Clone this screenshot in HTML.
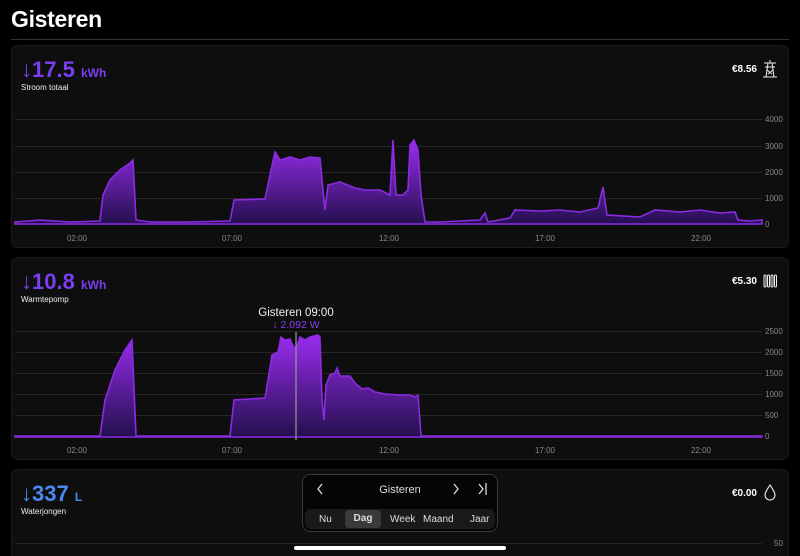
<!DOCTYPE html>
<html><head><style>
*{margin:0;padding:0;box-sizing:border-box}
html,body{width:800px;height:556px;overflow:hidden}
body{background:#000;font-family:"Liberation Sans",sans-serif;color:#fff;position:relative}
h1{position:absolute;left:11px;top:6px;font-size:23px;font-weight:bold;letter-spacing:-0.3px}
.hr{position:absolute;left:11px;top:39px;width:778px;height:1px;background:#333}
.card{position:absolute;left:11px;width:778px;background:#0e0e0e;border:1px solid #1c1c1c;border-radius:7px}
.val{position:absolute;left:10px;top:12px;font-size:22px;color:#7b3ff2;font-weight:bold}
.val small{font-size:12px}
.lbl{position:absolute;left:10px;top:38px;font-size:8px;color:#eee}
.cost{position:absolute;right:32px;top:19px;font-size:10px;font-weight:bold}
svg{position:absolute;left:0;top:0}
</style></head><body>
<h1>Gisteren</h1><div class="hr"></div>
<div class="card" style="top:45px;height:203px"></div>
<div class="card" style="top:257px;height:203px"></div>
<div class="card" style="top:469px;height:100px"></div>
<svg width="800" height="556" style="z-index:1">
<defs><linearGradient id="g1" x1="0" y1="140" x2="0" y2="224" gradientUnits="userSpaceOnUse"><stop offset="0" stop-color="#9a2cf0"/><stop offset="1" stop-color="#24104f"/></linearGradient>
<linearGradient id="g2" x1="0" y1="335" x2="0" y2="436" gradientUnits="userSpaceOnUse"><stop offset="0" stop-color="#9a2cf0"/><stop offset="1" stop-color="#24104f"/></linearGradient></defs>
<g stroke="#262626" stroke-width="1">
<line x1="15" x2="762" y1="119.5" y2="119.5"/><line x1="15" x2="762" y1="146.5" y2="146.5"/><line x1="15" x2="762" y1="172.5" y2="172.5"/><line x1="15" x2="762" y1="198.5" y2="198.5"/><line x1="15" x2="762" y1="224.5" y2="224.5"/>
<line x1="15" x2="762" y1="331.5" y2="331.5"/><line x1="15" x2="762" y1="352.5" y2="352.5"/><line x1="15" x2="762" y1="373.5" y2="373.5"/><line x1="15" x2="762" y1="394.5" y2="394.5"/><line x1="15" x2="762" y1="415.5" y2="415.5"/><line x1="15" x2="762" y1="436.5" y2="436.5"/>
<line x1="15" x2="762" y1="543.5" y2="543.5"/>
</g>
<path fill="url(#g1)" stroke="#8a2be2" stroke-width="1.6" d="M15 222 L40 220 L70 222 L100 221 L103 195 L110 180 L120 170 L130 163 L133 160 L136 220 L150 222 L190 222 L230 221 L234 200 L265 199 L270 175 L275 152 L280 160 L290 157 L300 160 L310 157 L320 158 L322 180 L325 210 L328 185 L340 182 L355 188 L365 190 L380 190 L390 195 L393 140 L396 195 L403 195 L408 190 L410 145 L414 140 L418 150 L421 195 L425 222 L440 222 L480 220 L485 213 L488 222 L510 218 L515 210 L540 211 L560 210 L580 212 L598 208 L603 187 L607 215 L640 217 L655 210 L680 212 L700 210 L720 213 L735 212 L738 220 L750 221 L762 220 L762 224 L15 224Z"/>
<path fill="url(#g2)" stroke="#8a2be2" stroke-width="1.6" d="M15 436 L100 436 L105 400 L115 370 L125 350 L132 340 L136 436 L230 436 L234 400 L265 398 L268 380 L272 355 L278 352 L281 337 L285 340 L290 339 L293 346 L296 349 L300 337 L305 340 L310 337 L318 335 L320 337 L322 400 L324 420 L326 385 L330 375 L335 373 L337 368 L340 376 L350 376 L355 383 L362 389 L368 388 L375 392 L385 394 L400 395 L410 395 L415 397 L418 395 L421 436 L762 436 L762 437 L15 437Z"/>
<line x1="296" x2="296" y1="332" y2="440" stroke="#999" stroke-width="1.2"/>
<g fill="#888" font-size="8" font-family="Liberation Sans">
<text x="765" y="122">4000</text><text x="765" y="149">3000</text><text x="765" y="175">2000</text><text x="765" y="201">1000</text><text x="765" y="227">0</text>
<text x="765" y="334">2500</text><text x="765" y="355">2000</text><text x="765" y="376">1500</text><text x="765" y="397">1000</text><text x="765" y="418">500</text><text x="765" y="439">0</text>
<text x="774" y="546">50</text>
<g text-anchor="middle"><text x="77" y="241">02:00</text><text x="232" y="241">07:00</text><text x="389" y="241">12:00</text><text x="545" y="241">17:00</text><text x="701" y="241">22:00</text>
<text x="77" y="453">02:00</text><text x="232" y="453">07:00</text><text x="389" y="453">12:00</text><text x="545" y="453">17:00</text><text x="701" y="453">22:00</text></g>
</g>
<text x="296" y="316" text-anchor="middle" fill="#eee" font-size="11.5" font-family="Liberation Sans">Gisteren 09:00</text>
<text x="296" y="328" text-anchor="middle" fill="#8a3cf0" font-size="10.5" font-family="Liberation Sans">↓ 2.092 W</text>
<g stroke="#eee" stroke-width="1" fill="none"><path d="M764 63h12M765 67h10M770 60v3M768 63l-2 14M772 63l2 14M763 77h14M767 70l5 4M773 70l-5 4"/></g>
<g stroke="#eee" stroke-width="1" fill="none"><rect x="764" y="275" width="2" height="12" rx="1"/><rect x="767.5" y="275" width="2" height="12" rx="1"/><rect x="771" y="275" width="2" height="12" rx="1"/><rect x="774.5" y="275" width="2" height="12" rx="1"/></g>
<path d="M770 485 C766 491 765 493 765 495 a5 5 0 0 0 10 0 C775 493 774 491 770 485Z" stroke="#eee" stroke-width="1.1" fill="none"/>
</svg>
<div style="position:absolute;left:11px;top:45px;width:778px;height:90px;z-index:2">
<div class="val">↓17.5 <small>kWh</small></div><div class="lbl">Stroom totaal</div><div class="cost">€8.56</div></div>
<div style="position:absolute;left:11px;top:257px;width:778px;height:50px;z-index:2">
<div class="val">↓10.8 <small>kWh</small></div><div class="lbl">Warmtepomp</div><div class="cost">€5.30</div></div>
<div style="position:absolute;left:11px;top:469px;width:778px;height:50px;z-index:2">
<div class="val" style="color:#4a8af0">↓337 <small>L</small></div><div class="lbl">Waterjongen</div><div class="cost">€0.00</div></div>
<div style="position:absolute;left:302px;top:474px;width:196px;height:58px;background:#050505;border:1px solid #3a3a3a;border-radius:8px;z-index:3;font-size:10px">
<svg width="196" height="30" style="position:absolute;left:0;top:0"><g stroke="#ddd" stroke-width="1.3" fill="none"><path d="M19 9l-4 5 4 5"/><path d="M151 9l4 5-4 5"/><path d="M176 9l4 5-4 5M183 8v12"/></g></svg>
<div style="position:absolute;left:0;width:100%;top:9px;text-align:center;color:#ddd;font-size:11px">Gisteren</div>
<div style="position:absolute;left:2px;top:34px;width:190px;height:20px;background:#1a1a1a;border-radius:5px;color:#ddd">
<span style="position:absolute;left:14px;top:5px">Nu</span>
<span style="position:absolute;left:40px;top:1px;width:36px;height:18px;background:#3a3a3c;border-radius:4px;text-align:center;line-height:18px;font-weight:bold">Dag</span>
<span style="position:absolute;left:85px;top:5px">Week</span>
<span style="position:absolute;left:118px;top:5px">Maand</span>
<span style="position:absolute;left:165px;top:5px">Jaar</span></div>
</div>
<div style="position:absolute;left:294px;top:546px;width:212px;height:4px;background:#fff;border-radius:2px;z-index:4"></div>
</body></html>
